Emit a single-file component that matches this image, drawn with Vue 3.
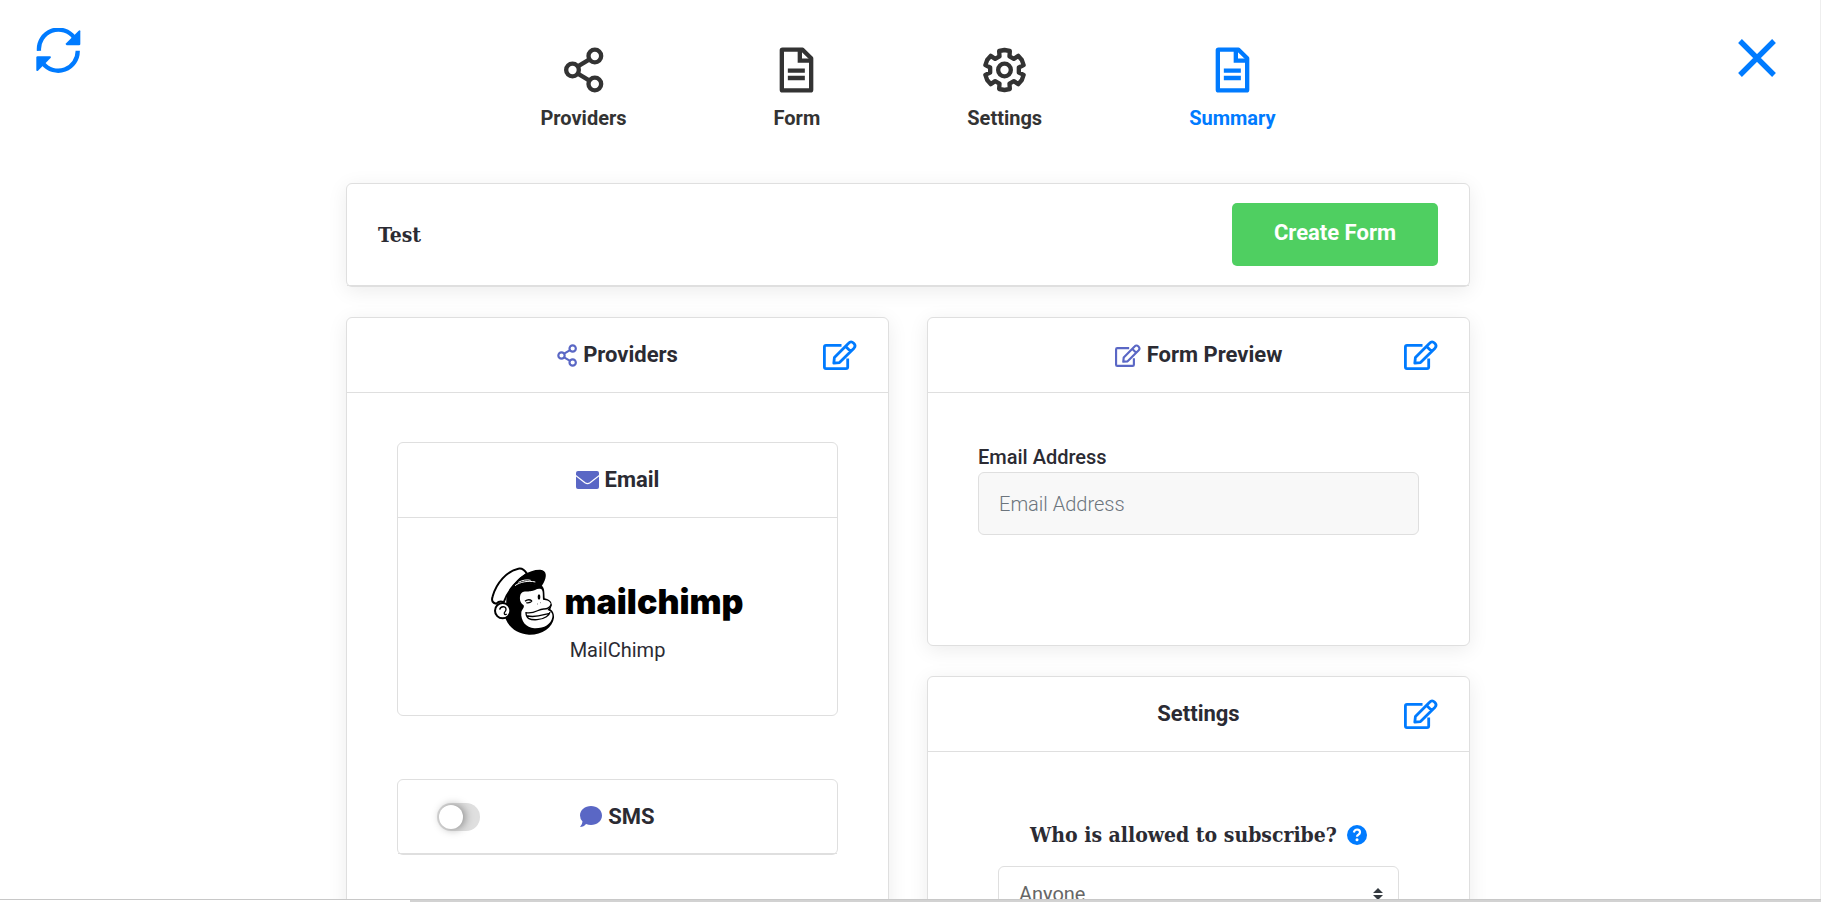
<script setup>
import { ref } from 'vue'

const steps = [
  { name: 'Providers', icon: 'share' },
  { name: 'Form', icon: 'doc' },
  { name: 'Settings', icon: 'gear' },
  { name: 'Summary', icon: 'doc' },
]
const active = ref('Summary')
const email = ref('')
const sms = ref(false)
const audience = ref('Anyone')

// Six identical teeth turned round the centre of the gear.
const tooth = [[-15, -41], [-16, -57], [0, -60], [16, -57], [15, -41]]
const gear = Array.from({ length: 6 }, (_, k) => {
  const a = (k * Math.PI) / 3
  return tooth
    .map(([x, y]) => [x * Math.cos(a) - y * Math.sin(a), x * Math.sin(a) + y * Math.cos(a)])
    .map((p) => p.map((n) => n.toFixed(1)).join(','))
    .join(' ')
}).join(' ')
</script>

<template>
  <svg class="defs" aria-hidden="true">
    <symbol id="i-share" viewBox="130 52 120 138">
      <g fill="none" stroke="currentColor" stroke-width="13">
        <circle cx="157" cy="121" r="19" /><circle cx="224" cy="79" r="19" /><circle cx="224" cy="163" r="19" />
        <path d="M173 110 208 89M173 132 208 153" />
      </g>
    </symbol>
    <symbol id="i-doc" viewBox="778 52 104 138">
      <g fill="none" stroke="currentColor" stroke-width="13" stroke-linejoin="round">
        <path d="M788 60H848L874 86V180Q874 182 872 182H788Q786 182 786 180V62Q786 60 788 60Z" />
        <path d="M840 60V93H874" stroke-linejoin="miter" />
        <path d="M804 123H855M804 145H855" />
      </g>
    </symbol>
    <symbol id="i-gear" viewBox="-66 -69 132 138">
      <g fill="none" stroke="currentColor" stroke-width="13" stroke-linejoin="round">
        <polygon :points="gear" /><circle r="19" />
      </g>
    </symbol>
    <symbol id="i-edit" viewBox="0 0 34 30">
      <g fill="none" stroke="currentColor" stroke-width="2.8" stroke-linejoin="round">
        <path d="M18.500 5.300H3Q1.400 5.300 1.400 7V27Q1.400 28.600 3 28.600H23Q24.700 28.600 24.700 27V18.500" />
        <path d="M10.800 23.200 11.400 17.600 25.600 3.300Q28 .7 30.700 3.200 33.200 5.700 31 8.200L16.500 22.600ZM22.700 6.500 27.700 11.400" />
      </g>
    </symbol>
  </svg>

  <div class="app">
    <main class="page">
      <header class="top">
        <button class="tool" type="button" aria-label="Reload">
          <svg width="45" height="45" viewBox="108 84 136 134">
            <g fill="none" stroke="currentColor" stroke-width="13">
              <path d="M117 152A59 59 0 0 1 224 113" /><path d="M234 152A59 59 0 0 1 129 190" />
            </g>
            <path fill="currentColor" d="M237 91Q242 88 242 93V131Q242 135 238 135H201Q196 134 199 129Z" />
            <path fill="currentColor" d="M109 172Q109 168 113 168H151Q155 169 152 174L114 212Q109 215 109 210Z" />
          </svg>
        </button>
        <nav class="steps">
          <a v-for="s in steps" :key="s.name" href="#" class="step" :class="{ on: active === s.name }" @click.prevent="active = s.name">
            <svg height="46" width="45"><use :href="'#i-' + s.icon" /></svg>
            <span>{{ s.name }}</span>
          </a>
        </nav>
        <button class="tool close" type="button" aria-label="Close">
          <svg width="38" height="38" viewBox="176 117 114 114">
            <path d="M182 123 284 225M284 123 182 225" stroke="currentColor" stroke-width="16" />
          </svg>
        </button>
      </header>

      <div class="content">
        <section class="card raised">
          <div class="bar">
            <h1 class="slab">Test</h1>
            <button class="create" type="button">Create Form</button>
          </div>
        </section>

        <div class="cols">
          <section class="card raised tall">
            <div class="head">
              <h2><svg class="glyph" width="20" height="23"><use href="#i-share" /></svg>Providers</h2>
              <button class="edit" type="button" aria-label="Edit providers"><svg width="34" height="30"><use href="#i-edit" /></svg></button>
            </div>
            <div class="body stack">
              <section class="card">
                <div class="head">
                  <h2>
                    <svg class="glyph" width="23" height="18" viewBox="0 0 23 18">
                      <rect width="23" height="18" rx="2" fill="currentColor" />
                      <path d="M-1 4 9 11.800Q11.500 13.500 14 11.800L24 4" fill="none" stroke="#fff" stroke-width="1.300" />
                    </svg>Email
                  </h2>
                </div>
                <div class="body vendor">
                  <div class="logo">
                    <svg width="64" height="68" viewBox="36 22 192 204">
                      <path d="M82 118C84 92 104 72 136 66L188 78C197 84 196 98 197 116C212 119 219 127 218 138L214 149C222 154 226 164 225 174C221 204 188 226 150 225C116 223 92 206 80 178Z" />
                      <path d="M124 106C128 92 142 96 154 95C168 94 174 84 186 88C193 92 191 104 192 120C204 121 215 125 215 134C214 143 208 148 205 151C218 154 222 164 220 173C216 195 194 207 166 206C142 205 124 184 127 158C129 148 137 145 134 137C123 130 121 117 124 106Z" fill="#fff" />
                      <path d="M52 132C42 131 36 124 41 110C52 70 84 34 118 27C132 24 139 34 144 42C118 58 86 92 74 128C66 124 58 126 52 132Z" fill="#fff" stroke="#000" stroke-width="6" stroke-linejoin="round" />
                      <path d="M99 82C116 54 150 29 184 30C204 32 204 50 194 69L186 83C160 66 126 69 99 82Z" />
                      <path d="M108 78C122 67 148 62 169 67M118 68C130 61 145 59 155 62" fill="none" stroke="#fff" stroke-width="3" />
                      <circle cx="71" cy="153" r="23" fill="#fff" stroke="#000" stroke-width="6" />
                      <path d="M62 150C64 139 81 138 81 149C80 158 75 156 76 162Q78 167 83 163" fill="none" stroke="#000" stroke-width="4" />
                      <path d="M138 125Q149 116 159 124M142 129Q151 132 159 124M174 133H175M183 129H184" fill="none" stroke="#000" stroke-width="4" />
                      <ellipse cx="180" cy="112" rx="4" ry="8" />
                      <path d="M141 159C169 164 177 147 195 148C206 148 213 142 217 134M141 157C140 178 154 181 174 180C198 178 212 166 213 157M143 168C167 176 190 166 211 161" fill="none" stroke="#000" stroke-width="4" />
                    </svg>
                    <span class="word">mailchimp</span>
                  </div>
                  <span>MailChimp</span>
                </div>
              </section>
              <section class="card">
                <div class="head sms">
                  <label class="switch"><input v-model="sms" type="checkbox" aria-label="Enable SMS" /><i></i></label>
                  <h2>
                    <svg class="glyph" width="22" height="22" viewBox="0 0 22 22">
                      <path fill="currentColor" d="M11 0C17 0 22 4 22 9.500S17 19 11 19Q8.500 19 6 18 4 21 0 21 2.500 18 2.500 15.500 0 13 0 9.500C0 4 5 0 11 0Z" />
                    </svg>SMS
                  </h2>
                </div>
              </section>
            </div>
          </section>

          <div class="side">
            <section class="card raised">
              <div class="head">
                <h2><svg class="glyph" width="26" height="23"><use href="#i-edit" /></svg>Form Preview</h2>
                <button class="edit" type="button" aria-label="Edit form"><svg width="34" height="30"><use href="#i-edit" /></svg></button>
              </div>
              <div class="body">
                <div class="field">
                  <label for="email">Email Address</label>
                  <input id="email" v-model="email" type="email" placeholder="Email Address" />
                </div>
              </div>
            </section>

            <section class="card raised">
              <div class="head">
                <h2>Settings</h2>
                <button class="edit" type="button" aria-label="Edit settings"><svg width="34" height="30"><use href="#i-edit" /></svg></button>
              </div>
              <div class="body">
                <div class="question">
                  <label for="who" class="slab">Who is allowed to subscribe?
                    <svg class="help" width="20" height="20" viewBox="0 0 20 20">
                      <circle cx="10" cy="10" r="10" fill="currentColor" />
                      <path d="M6.800 7.500Q7.500 4.500 10.200 4.500 13 4.600 13 7.200 13 8.700 11.300 9.700 10 10.400 10 11.800" fill="none" stroke="#fff" stroke-width="2.200" />
                      <circle cx="10" cy="14.700" r="1.500" fill="#fff" />
                    </svg>
                  </label>
                  <div class="pick">
                    <select id="who" v-model="audience">
                      <option>Anyone</option>
                    </select>
                    <svg width="10" height="12" viewBox="0 0 10 12"><path fill="#343a40" d="M5 0 10 5H0ZM0 7H10L5 12Z" /></svg>
                  </div>
                </div>
              </div>
            </section>
          </div>
        </div>
      </div>
    </main>
    <div class="track"><div class="thumb"></div></div>
  </div>
</template>

<style>
body {
  overflow: hidden;
}
</style>

<style scoped>
* {
  box-sizing: border-box;
}
.defs {
  position: absolute;
  width: 0;
  height: 0;
}
.app {
  display: flex;
  flex-direction: column;
  height: 100vh;
  background: #fff;
  color: #2b2b33;
  font: 400 20px/30px Roboto, "Liberation Sans", sans-serif;
}
.page {
  flex: 1;
  min-height: 0;
  overflow: hidden;
  padding-right: 4px;
  border-right: 1px solid #eee;
}
svg {
  display: block;
}
button {
  padding: 0;
  border: 0;
  background: none;
  font: inherit;
  cursor: pointer;
}
.top {
  display: grid;
  grid-template-columns: 1fr auto 1fr;
  align-items: start;
  padding: 28px 36px 0;
}
.tool {
  justify-self: start;
  color: #007bff;
}
.close {
  justify-self: end;
  padding: 11px 4px;
}
.steps {
  display: flex;
  gap: 147px;
  padding-top: 19px;
}
.step {
  display: flex;
  flex-direction: column;
  align-items: center;
  gap: 10px;
  height: 136px;
  color: #333;
  font-weight: 700;
  text-decoration: none;
}
.step.on {
  color: #007bff;
}
.content {
  display: flex;
  flex-direction: column;
  gap: 30px;
  max-width: 1124px;
  margin: 0 auto;
}
.card {
  border: 1px solid #dfdfdf;
  border-radius: 6px;
  background: #fff;
}
.raised {
  box-shadow: 0 4px 20px rgba(0, 0, 0, 0.08);
}
.bar {
  display: flex;
  align-items: center;
  justify-content: space-between;
  padding: 19px 31px;
  border-bottom: 1px solid #dfdfdf;
}
.slab {
  margin: 0;
  font-family: "Roboto Slab", "DejaVu Serif Condensed", "DejaVu Serif", serif;
  font-size: 21px;
  font-weight: 700;
}
.create {
  height: 63px;
  padding: 0 42px 3px;
  border-radius: 5px;
  background: #4fcf61;
  color: #fff;
  font-size: 22px;
  font-weight: 700;
}
.cols {
  display: grid;
  grid-template-columns: 1fr 1fr;
  gap: 38px;
  align-items: start;
}
.side {
  display: flex;
  flex-direction: column;
  gap: 30px;
}
.tall {
  min-height: 800px;
}
.head {
  display: grid;
  grid-template-columns: 1fr auto 1fr;
  align-items: center;
  min-height: 75px;
  padding: 0 31px;
  border-bottom: 1px solid #dfdfdf;
}
.sms {
  min-height: 74px;
  padding: 0 39px;
}
h2 {
  display: flex;
  grid-column: 2;
  align-items: center;
  gap: 6px;
  margin: 0;
  font-size: 22px;
  font-weight: 700;
}
.glyph {
  color: #5a67c5;
}
.edit {
  justify-self: end;
  color: #007bff;
}
.body {
  padding: 49px 50px 50px;
}
.stack {
  display: flex;
  flex-direction: column;
  gap: 63px;
}
.vendor {
  display: flex;
  flex-direction: column;
  align-items: center;
}
.logo {
  display: flex;
  align-items: center;
  gap: 9px;
  color: #000;
}
.word {
  padding-top: 2px;
  font: 900 34px/46px Inter, Roboto, sans-serif;
}
.switch {
  position: relative;
  width: 43px;
  height: 28px;
}
.switch input {
  position: absolute;
  inset: 0;
  width: 100%;
  height: 100%;
  margin: 0;
  opacity: 0;
}
.switch i {
  display: block;
  height: 28px;
  padding: 2px;
  border-radius: 14px;
  background: #dfdfdf;
}
.switch i::before {
  content: "";
  display: block;
  width: 24px;
  height: 24px;
  border-radius: 50%;
  background: #fff;
  box-shadow: 2px 0 10px rgba(0, 0, 0, 0.4);
}
.switch input:checked + i {
  background: #007bff;
}
.switch input:checked + i::before {
  margin-left: auto;
}
.field {
  display: flex;
  flex-direction: column;
  margin-bottom: 60px;
}
.field label {
  font-weight: 500;
}
.field input,
.pick select {
  width: 100%;
  height: 63px;
  padding: 0 20px;
  border: 1px solid #dfdfdf;
  border-radius: 6px;
  background: #f8f8f8;
  color: #555;
  font: 300 20px/30px Roboto, "Liberation Sans", sans-serif;
}
.field input::placeholder {
  color: #6c757d;
}
.question {
  display: flex;
  flex-direction: column;
  gap: 16px;
  padding: 19px 20px 0;
}
.question label {
  display: flex;
  align-items: center;
  justify-content: center;
  gap: 10px;
}
.help {
  color: #007bff;
}
.pick {
  position: relative;
}
.pick select {
  appearance: none;
  padding-bottom: 8px;
  background: #fff;
  font-weight: 400;
  color: #666;
}
.pick svg {
  position: absolute;
  top: 22px;
  right: 16px;
  pointer-events: none;
}
.track {
  height: 3px;
  padding-left: 410px;
  border-top: 1px solid #c8c8c8;
}
.thumb {
  height: 2px;
  background: #d2d2d2;
}
</style>
